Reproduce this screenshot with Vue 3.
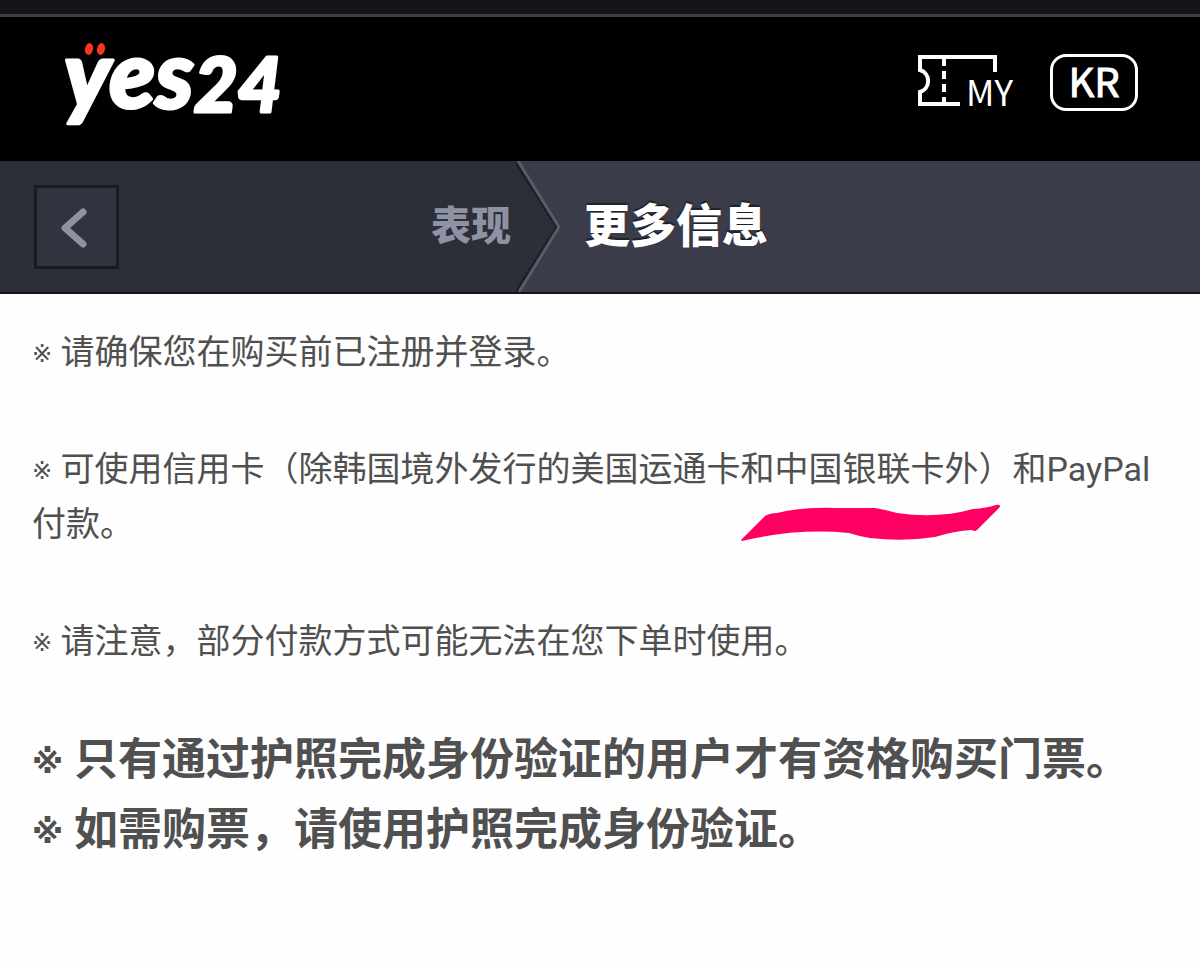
<script setup>
const notes = [
  '请确保您在购买前已注册并登录。',
  '可使用信用卡（除韩国境外发行的美国运通卡和中国银联卡外）和PayPal付款。',
  '请注意，部分付款方式可能无法在您下单时使用。',
]
const important = [
  '只有通过护照完成身份验证的用户才有资格购买门票。',
  '如需购票，请使用护照完成身份验证。',
]
</script>

<template>
  <div class="page">
    <div class="status"></div>
    <header class="top">
      <a class="logo" href="#" aria-label="yes24">
        <svg width="220" height="84" viewBox="0 0 220 84">
          <text class="wordmark" x="0" y="66">yes<tspan class="digits" y="70">24</tspan></text>
          <g fill="#f5381b">
            <ellipse cx="25" cy="7" rx="4" ry="6" transform="rotate(12 25 7)" />
            <ellipse cx="37" cy="7" rx="4" ry="6" transform="rotate(12 37 7)" />
          </g>
        </svg>
      </a>
      <div class="tools">
        <a class="my" href="#">
          <svg width="96" height="56" viewBox="0 0 96 56" fill="none" stroke="#fff" stroke-width="4">
            <path d="M78 18V3H3V16A11.500 11.500 0 0 1 3 38V50H43" />
            <path d="M27 5V12M27 17V25M27 30V38M27 43V50" />
          </svg>
          <span class="my-label">MY</span>
        </a>
        <button class="lang" type="button">KR</button>
      </div>
    </header>

    <nav class="crumbs">
      <div class="previous">
        <button class="back" type="button" aria-label="返回">
          <svg width="34" height="46" viewBox="0 0 34 46" fill="none" stroke="#8f92a3" stroke-width="7" stroke-linecap="round" stroke-linejoin="round">
            <path d="M26 8L8 24L26 40" />
          </svg>
        </button>
        <a class="parent" href="#">表现</a>
      </div>
      <svg class="divider" width="46" height="131" viewBox="0 0 46 131">
        <path d="M0 0H1L43 66L2 131H0Z" fill="#2c2e38" />
        <path d="M-1 0L41 66L0 131" fill="none" stroke="#1d1e26" stroke-width="3" />
        <path d="M2 0L43 66L3 131" fill="none" stroke="#5a5b68" stroke-width="3" />
      </svg>
      <h1 class="current">更多信息</h1>
    </nav>

    <main class="content">
      <p v-for="(note, i) in notes" :key="note" class="note">
        <span class="mark">※</span> {{ note }}
        <svg v-if="i === 1" class="scribble" width="262" height="38" viewBox="0 0 262 38" aria-hidden="true">
          <path d="M1 36L25 12Q30 9 37 9Q62 3 96 4L135 4Q147 6 157 9Q198 15 233 5Q246 4 256 1Q262 0 259 4L237 26Q235 28 232 26Q214 27 195 33Q163 38 130 34Q118 32 109 29Q55 24 2 37Z" fill="#ff0062" />
        </svg>
      </p>
      <div class="important">
        <p v-for="line in important" :key="line"><span class="mark">※</span> {{ line }}</p>
      </div>
    </main>
  </div>
</template>

<style>
body {
  margin: 0;
  background: #fefefe;
}
</style>

<style scoped>
.page {
  font-family: Roboto, "Noto Sans CJK SC", sans-serif;
  color: #505050;
}
.status {
  height: 14px;
  background: #14151b;
  border-bottom: 3px solid #3c3d46;
}
.top {
  display: flex;
  justify-content: space-between;
  align-items: flex-start;
  height: 144px;
  padding: 0 62px 0 64px;
  box-sizing: border-box;
  background: #000;
}
.logo {
  margin-top: 25px;
}
.logo svg {
  display: block;
  overflow: visible;
}
.wordmark {
  font-family: Lato, sans-serif;
  font-size: 94px;
  font-weight: 900;
  font-style: italic;
  fill: #fff;
  stroke: #fff;
  stroke-width: 3px;
  stroke-linejoin: round;
}
.digits {
  font-size: 76px;
}
.tools {
  display: flex;
  gap: 37px;
  margin-top: 37px;
}
.my {
  position: relative;
  color: #fff;
}
.my svg {
  display: block;
}
.my-label {
  position: absolute;
  right: 0;
  bottom: 2px;
  font: 35px/36px "Noto Sans CJK SC", sans-serif;
}
.lang {
  width: 88px;
  height: 57px;
  padding: 0 0 6px;
  border: 3px solid #fff;
  border-radius: 16px;
  background: #000;
  color: #fff;
  font: 400 40px/44px "Noto Sans CJK SC", sans-serif;
  -webkit-text-stroke: 1px #fff;
}
.crumbs {
  display: flex;
  align-items: center;
  height: 131px;
  border-bottom: 2px solid #14151c;
  background: #3b3c49;
}
.previous {
  display: flex;
  flex: 0 0 43%;
  align-items: center;
  justify-content: space-between;
  height: 100%;
  padding: 0 5px 0 34px;
  box-sizing: border-box;
  background: #2c2e38;
}
.back {
  display: flex;
  align-items: center;
  justify-content: center;
  width: 85px;
  height: 84px;
  padding: 0 6px 0 0;
  border: 3px solid #191a22;
  background: #31333f;
}
.parent {
  padding-bottom: 8px;
  color: #8f92a3;
  font-size: 40px;
  font-weight: 900;
  text-decoration: none;
}
.current {
  margin: 0 0 10px 22px;
  color: #fff;
  font-size: 46px;
  font-weight: 900;
  text-shadow: 0 -2px 1px #202129;
}
.content {
  padding: 31px 32px;
}
.note,
.important p {
  margin: 0;
}
.note {
  position: relative;
  margin-bottom: 62px;
  font-size: 34px;
  line-height: 55px;
}
.note:nth-of-type(3) {
  margin-bottom: 56px;
}
.mark {
  font-family: "DejaVu Sans", sans-serif;
  font-size: 24px;
  line-height: 0;
  vertical-align: 2px;
}
.scribble {
  position: absolute;
  left: 708px;
  top: 62px;
}
.important {
  font-size: 44px;
  font-weight: 700;
  line-height: 70px;
}
.important .mark {
  font-size: 32px;
}
</style>
